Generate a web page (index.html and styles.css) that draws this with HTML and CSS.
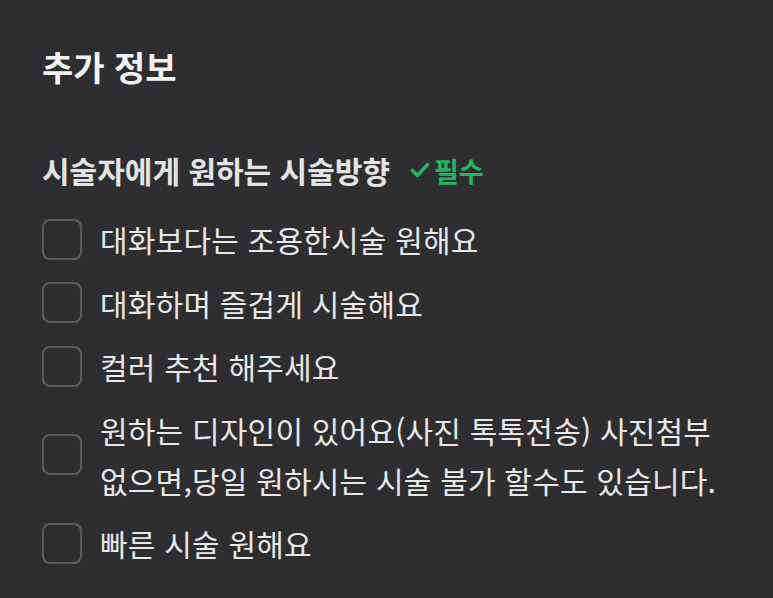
FILE: index.html
```html
<!DOCTYPE html>
<html lang="ko">
<head>
<meta charset="utf-8">
<link rel="stylesheet" href="styles.css">
</head>
<body>
<div class="panel">
  <h1 class="title">추가 정보</h1>
  <div class="question">
    <span class="q-text">시술자에게 원하는 시술방향</span>
    <span class="req">
      <svg class="req-icon" viewBox="0 0 20 18" width="20" height="18"><path d="M2.5 9.5 L7.5 14.5 L17.5 3.5" fill="none" stroke="#22b45e" stroke-width="3.6" stroke-linecap="round" stroke-linejoin="round"/></svg>
      <span class="req-text">필수</span>
    </span>
  </div>
  <ul class="options">
    <li class="option"><span class="box"></span><span class="label">대화보다는 조용한시술 원해요</span></li>
    <li class="option"><span class="box"></span><span class="label">대화하며 즐겁게 시술해요</span></li>
    <li class="option"><span class="box"></span><span class="label">컬러 추천 해주세요</span></li>
    <li class="option"><span class="box"></span><span class="label">원하는 디자인이 있어요(사진 톡톡전송) 사진첨부 없으면,당일 원하시는 시술 불가 할수도 있습니다.</span></li>
    <li class="option"><span class="box"></span><span class="label">빠른 시술 원해요</span></li>
  </ul>
</div>
</body>
</html>
```

FILE: styles.css
```css
html, body {
  margin: 0;
  padding: 0;
  background: #2e2e30;
}
body {
  font-family: "Noto Sans CJK KR", "Noto Sans", sans-serif;
  color: #e6e6e6;
}
.panel {
  padding: 42px 40px 0 42px;
}
.title {
  margin: 0;
  font-size: 34px;
  font-weight: 700;
  line-height: 50px;
  color: #f2f2f2;
}
.question {
  margin-top: 60px;
  display: flex;
  align-items: center;
  height: 36px;
}
.q-text {
  font-size: 30px;
  font-weight: 700;
  color: #e4e4e4;
}
.req {
  display: flex;
  align-items: center;
  margin-left: 20px;
  gap: 4px;
}
.req-text {
  color: #22b45e;
  font-size: 27px;
  font-weight: 700;
}
.options {
  list-style: none;
  margin: 26px 0 0 0;
  padding: 0;
  display: flex;
  flex-direction: column;
  gap: 13.5px;
}
.option {
  display: flex;
  align-items: center;
  gap: 18px;
}
.box {
  flex: none;
  width: 36px;
  height: 37px;
  border: 2px solid #5c5c5e;
  border-radius: 8px;
}
.label {
  font-size: 30px;
  line-height: 50px;
  color: #e8e8e8;
  letter-spacing: 0.2px;
}
```
